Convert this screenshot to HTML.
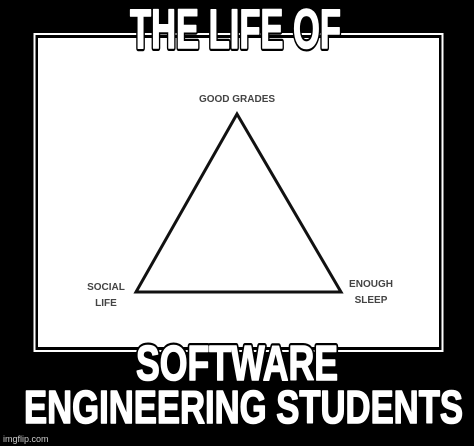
<!DOCTYPE html>
<html><head><style>
html,body{margin:0;padding:0;background:#000;}
svg{display:block}
</style></head><body>
<svg width="474" height="446" viewBox="0 0 474 446" xmlns="http://www.w3.org/2000/svg">
<rect width="474" height="446" fill="#000"/>
<rect x="34.5" y="34" width="408" height="317" fill="none" stroke="#fff" stroke-width="2"/>
<rect x="38" y="38" width="401" height="309" fill="#fff"/>
<polygon points="237,114 136,292 341,292" fill="none" stroke="#111" stroke-width="3" stroke-linejoin="miter"/>
<g font-family="Liberation Sans, sans-serif" font-size="10" font-weight="bold" fill="#444" text-anchor="middle">
<text x="237" y="102">GOOD GRADES</text>
<text x="106" y="290">SOCIAL</text>
<text x="106" y="306">LIFE</text>
<text x="371" y="287">ENOUGH</text>
<text x="371" y="303">SLEEP</text>
</g>
<g font-family="Liberation Sans, sans-serif" font-weight="bold" fill="#000" stroke="#000" stroke-width="6" stroke-linejoin="round">
<text x="130" y="48" font-size="56" textLength="211" lengthAdjust="spacingAndGlyphs">THE LIFE OF</text>
<text x="136" y="380" font-size="49" textLength="202" lengthAdjust="spacingAndGlyphs">SOFTWARE</text>
<text x="24" y="423" font-size="46" textLength="439" lengthAdjust="spacingAndGlyphs">ENGINEERING STUDENTS</text>
</g>
<g font-family="Liberation Sans, sans-serif" font-weight="bold" fill="#fff" stroke="#fff" stroke-width="1.6" stroke-linejoin="round">
<text x="130" y="48" font-size="56" textLength="211" lengthAdjust="spacingAndGlyphs">THE LIFE OF</text>
<text x="136" y="380" font-size="49" textLength="202" lengthAdjust="spacingAndGlyphs">SOFTWARE</text>
<text x="24" y="423" font-size="46" textLength="439" lengthAdjust="spacingAndGlyphs">ENGINEERING STUDENTS</text>
</g>
<text x="3" y="442" font-family="Liberation Sans, sans-serif" font-size="9" fill="#ccc">imgflip.com</text>
</svg>
</body></html>
